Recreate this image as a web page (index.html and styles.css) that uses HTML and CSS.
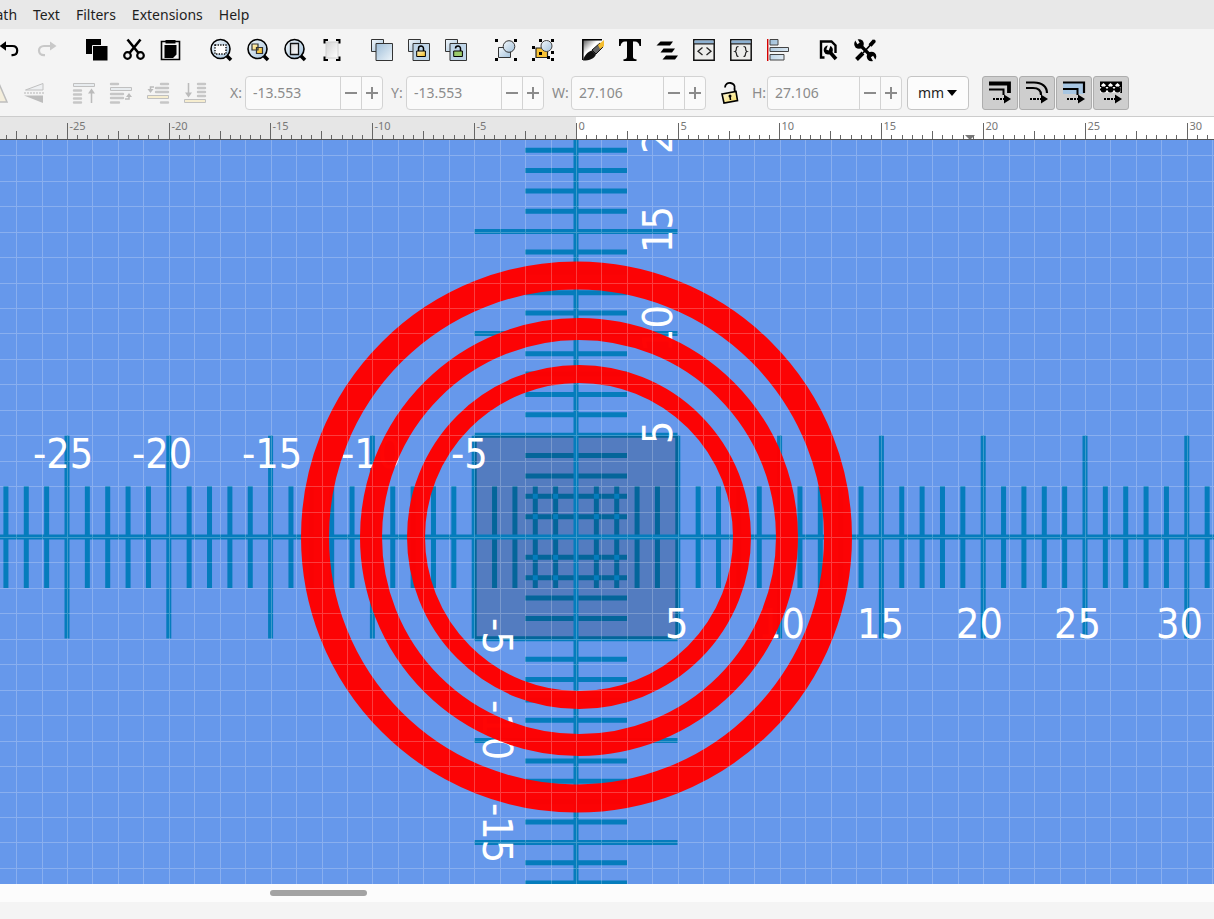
FILE: index.html
```html
<!DOCTYPE html>
<html lang="en">
<head>
<meta charset="utf-8">
<title>Vector drawing editor</title>
<link rel="stylesheet" href="styles.css">
</head>
<body>
<svg class="defs" aria-hidden="true">
  <defs>
    <linearGradient id="glass" x1="0" y1="0" x2="1" y2="1"><stop offset="0" stop-color="#f2f7fb"/><stop offset="1" stop-color="#a5c3dc"/></linearGradient>
    <linearGradient id="page" x1="0" y1="0" x2="1" y2="1"><stop offset="0" stop-color="#d4d4d4"/><stop offset="1" stop-color="#ffffff"/></linearGradient>
    <linearGradient id="blue" x1="0" y1="0" x2="1" y2="1"><stop offset="0" stop-color="#9dbdd8"/><stop offset="1" stop-color="#eef5fa"/></linearGradient>
    <linearGradient id="gold" x1="0" y1="0" x2="1" y2="1"><stop offset="0" stop-color="#fff6c8"/><stop offset="1" stop-color="#f0b71c"/></linearGradient>
    <linearGradient id="cream" x1="0" y1="0" x2="1" y2="1"><stop offset="0" stop-color="#fffbe4"/><stop offset="1" stop-color="#f7dc5c"/></linearGradient>
    <linearGradient id="ink" x1="0" y1="0" x2="1" y2="1"><stop offset="0" stop-color="#555"/><stop offset=".4" stop-color="#fff"/></linearGradient>
  </defs>
</svg>

<nav class="menubar" aria-label="Menu">
  <button>Path</button><button>Text</button><button>Filters</button><button>Extensions</button><button>Help</button>
</nav>

<div class="commands" role="toolbar" aria-label="Commands">
  <div class="group">
    <button aria-label="Undo"><svg viewBox="0 0 22 22"><path d="M5 7h8.500c3 0 4.700 1.800 4.700 4.600s-1.700 4.600-4.700 4.600h-1" fill="none" stroke="#000" stroke-width="2.200"/><path d="M.500 7 7 2.300v9.400z"/></svg></button>
    <button aria-label="Redo" disabled><svg viewBox="0 0 22 22"><path d="M15 7H8c-3 0-5 2-5 4.600s2 4.600 5 4.600h1" fill="none" stroke="#c8c8c8" stroke-width="2.200"/><path d="M20.500 7 14 2.500v9z" fill="#c8c8c8"/></svg></button>
  </div>
  <div class="group">
    <button aria-label="Copy"><svg viewBox="0 0 22 22"><path d="M0 0h15v15H0z"/><path d="M6.500 6.500h15.500v15.500H6.500z" stroke="#f4f4f4"/></svg></button>
    <button aria-label="Cut"><svg viewBox="0 0 22 22"><g fill="none" stroke="#000"><circle cx="4.500" cy="16.500" r="3.300" stroke-width="2.200"/><circle cx="17.500" cy="16.500" r="3.300" stroke-width="2.200"/><path d="M4.500.500 15.500 14M17.500.500 6.500 14" stroke-width="2.600"/></g></svg></button>
    <button aria-label="Paste"><svg viewBox="0 0 22 22"><path d="M6 2.500H1.500v18h18v-18H15" fill="none" stroke="#000" stroke-width="1.600"/><path d="M5.500 1h10v3.500h-10zM4.500 6h12v9.500L13 19H4.500z"/></svg></button>
  </div>
  <div class="group">
    <button aria-label="Zoom selection"><svg viewBox="0 0 22 22"><path d="m17 17 4 4" stroke="#000" stroke-width="3.500"/><circle cx="10.500" cy="10" r="9.500" fill="url(#glass)" stroke="#000" stroke-width="1.600"/><path d="M5 6h11v9H5z" fill="#fff" stroke="#000" stroke-width="1.400" stroke-dasharray="1.300 1.300"/></svg></button>
    <button aria-label="Zoom drawing"><svg viewBox="0 0 22 22"><path d="m17 17 4 4" stroke="#000" stroke-width="3.500"/><circle cx="10.500" cy="10" r="9.500" fill="url(#glass)" stroke="#000" stroke-width="1.600"/><path d="M5 5h6v6H5zM9.500 8.500h6v6h-6z" fill="url(#gold)" stroke="#333" stroke-width="1.200"/></svg></button>
    <button aria-label="Zoom page"><svg viewBox="0 0 22 22"><path d="m17 17 4 4" stroke="#000" stroke-width="3.500"/><circle cx="10.500" cy="10" r="9.500" fill="url(#glass)" stroke="#000" stroke-width="1.600"/><path d="M6.500 4.500h8v11h-8z" fill="url(#page)" stroke="#111" stroke-width="1.300"/></svg></button>
    <button aria-label="Resize page"><svg viewBox="0 0 22 22"><path d="M5 3h12v16H5z" fill="url(#page)" stroke="#d0d0d0"/><path d="M3.500 4.500V1H7M15 1h3.500v3.500M3.500 17.500V21H7M15 21h3.500v-3.500" fill="none" stroke="#000" stroke-width="2"/></svg></button>
  </div>
  <div class="group">
    <button aria-label="Duplicate"><svg viewBox="0 0 22 22"><path d="M.500.500h12v12H.500z" fill="url(#glass)" stroke="#333"/><path d="M5 4.500h16.500v17H5z" fill="url(#blue)" stroke="#333"/></svg></button>
    <button aria-label="Clone"><svg viewBox="0 0 22 22"><path d="M.500.500h12v12H.500z" fill="url(#glass)" stroke="#333"/><path d="M5 4.500h16.500v17H5z" fill="#bfd5e8" stroke="#333"/><path d="M10.500 12v-2.500a2.500 2.500 0 0 1 5 0V12" fill="none" stroke="#000" stroke-width="1.500"/><path d="M8.700 12h8.700v5.500H8.700z" fill="url(#gold)" stroke="#000"/></svg></button>
    <button aria-label="Unlink clone"><svg viewBox="0 0 22 22"><path d="M.500.500h12v12H.500z" fill="url(#glass)" stroke="#333"/><path d="M5 4.500h16.500v17H5z" fill="#bfd5e8" stroke="#333"/><path d="M10.500 9.500a2.500 2.500 0 0 1 5 0V12" fill="none" stroke="#000" stroke-width="1.500"/><path d="M8.700 12h8.700v5.500H8.700z" fill="#9bcb6b" stroke="#000"/></svg></button>
  </div>
  <div class="group">
    <button aria-label="Group"><svg viewBox="0 0 22 22"><path d="M3.500 8.500h12v10h-12z" fill="url(#glass)" stroke="#333"/><circle cx="14" cy="7.500" r="5.800" fill="url(#glass)" stroke="#333"/><path d="M0 0h3v3H0zM19 0h3v3h-3zM0 19h3v3H0zM19 19h3v3h-3z"/></svg></button>
    <button aria-label="Ungroup"><svg viewBox="0 0 22 22"><path d="M4 9h11.500v9.500H4z" fill="#f7c234" stroke="#222" stroke-width="1.200"/><circle cx="14.500" cy="7" r="5.500" fill="url(#glass)" stroke="#444"/><path d="M7 0h3v3H7zM19 0h3v3h-3zM0 7h3v3H0zM7 13h3v3H7zM0 19h3v3H0zM15 17h3v3h-3zM19 19h3v3h-3zM19 12h3v3h-3z"/></svg></button>
  </div>
  <div class="group">
    <button aria-label="Fill and stroke"><svg viewBox="0 0 22 22"><path d="M.800.800h20L.800 21z" fill="url(#ink)"/><path d="M.800 21V.800H20" fill="none" stroke="#000" stroke-width="1.500"/><path d="M1 21.500c1-5 5-9 9-10l4 4c-2 4-6 6-13 6z" fill="#111"/><path d="m10 11 8-7 3 4-7 7z" fill="#666" stroke="#111"/><path d="m16 6 6-5v6l-4 3z" fill="#f5bd2e"/></svg></button>
    <button aria-label="Text and font"><svg viewBox="0 0 22 22"><path d="M0 0h22v7h-1.500c-.500-3-2-4.500-4.500-4.500h-2V17c0 2.500.500 3 3.500 3.300V22h-13v-1.700c3-.300 3.500-.800 3.500-3.300V2.500H6C3.500 2.500 2 4 1.500 7H0z"/></svg></button>
    <button aria-label="Layers"><svg viewBox="0 0 22 22"><path d="M4.500 2.500H17l-3 4H.500zM7.500 9.500H19l-3 4H4.500zM10 16.500h12l-3 4H6.500z"/></svg></button>
    <button aria-label="XML editor"><svg viewBox="0 0 22 22"><path d="M.800.800h20.400v20.400H.800z" fill="#ededeb" stroke="#111" stroke-width="1.500"/><path d="M1.500 1.500h19v3h-19z" fill="#8db1d2"/><path d="M1 4.800h20M9.500 8.500 5 12.200 9.500 16m4-7.500 4.500 3.700-4.500 3.800" fill="none" stroke="#222" stroke-width="1.300"/></svg></button>
    <button aria-label="Selectors and CSS"><svg viewBox="0 0 22 22"><path d="M.800.800h20.400v20.400H.800z" fill="#ededeb" stroke="#111" stroke-width="1.500"/><path d="M1.500 1.500h19v3h-19z" fill="#8db1d2"/><path d="M1 4.800h20M8.500 7.500c-4 0-.500 4-3.500 5 3 1 0 5 3.500 5m5-10c4 0 .500 4 3.500 5-3 1 0 5-3.500 5" fill="none" stroke="#222" stroke-width="1.200"/></svg></button>
    <button aria-label="Align and distribute"><svg viewBox="0 0 22 22"><path d="M.700 0v22" stroke="#d40000" stroke-width="1.400"/><path d="M3 .500h8v5.500H3zM3 8.500h18.500v4H3zM3 15.500h14v5.500H3z" fill="url(#blue)" stroke="#444"/></svg></button>
  </div>
  <div class="group">
    <button aria-label="Document properties"><svg viewBox="0 0 22 22"><path d="M7.500 18.500H4v-16h10.500l4 4V14" fill="none" stroke="#000" stroke-width="2.400"/><circle cx="11.300" cy="11" r="4.600"/><path d="m12 12 7 8" stroke="#000" stroke-width="3.600"/><path d="M12.500 5.500 10.500 11" stroke="#f4f4f4" stroke-width="2.600"/></svg></button>
    <button aria-label="Preferences"><svg viewBox="0 0 22 22"><path d="m5 5 12 12" stroke="#000" stroke-width="3.200"/><circle cx="5" cy="5" r="4.800"/><circle cx="17.500" cy="17.500" r="4.800"/><path d="M2 0 4.500 4.500M20.500 22l-2.500-4.500" stroke="#f4f4f4" stroke-width="2.600"/><path d="M21 1 9 14" stroke="#000" stroke-width="1.800"/><path d="m20.500 1.500-4.500 5M9 14l-6.500 6.500" fill="none" stroke="#000" stroke-width="4"/></svg></button>
  </div>
</div>

<div class="controls" role="toolbar" aria-label="Tool controls">
  <div class="group">
    <button aria-label="Flip horizontal" disabled><svg viewBox="0 0 22 22"><path d="M13 1.500V20h8z" fill="#f4eedc" stroke="#bdbdbd" stroke-width="1.500"/></svg></button>
    <button aria-label="Flip vertical" disabled><svg viewBox="0 0 22 22"><path d="M20 1.500V8H2.500z" fill="#eef0f2" stroke="#c0c0c0"/><path d="M20 13.500V21L1 13.500z" fill="#bdbdbd"/><path d="M1 11h20" stroke="#b5b5b5" stroke-dasharray="2 1"/></svg></button>
  </div>
  <div class="group">
    <button aria-label="Raise to top" disabled><svg viewBox="0 0 22 22"><path d="M.500 1.500h21v3H.500z" fill="#e8ecef" stroke="#c0c0c0"/><path d="M1 8.500h7M1 12.500h7M1 16.500h7M1 20.500h7" stroke="#c6c6c6" stroke-width="2.400" stroke-linecap="round"/><path d="M18.500 21V10" stroke="#bbb" stroke-width="1.500"/><path d="m18.500 6.500 3.500 5h-7z" fill="#bbb"/></svg></button>
    <button aria-label="Raise" disabled><svg viewBox="0 0 22 22"><path d="M.500 5.500h21v3H.500z" fill="#e8ecef" stroke="#c0c0c0"/><path d="M1 2h7M1 12h12M1 16h12M1 20.500h8" stroke="#c6c6c6" stroke-width="2.400" stroke-linecap="round"/><path d="M15 17h4v-3" fill="none" stroke="#bbb" stroke-width="1.500"/><path d="m19 11 3 4h-6z" fill="#bbb"/></svg></button>
    <button aria-label="Lower" disabled><svg viewBox="0 0 22 22"><path d="M.500 13.500h21v3H.500z" fill="#f6edcf" stroke="#c0c0c0"/><path d="M14 2h7M9 6h12M9 10h12M14 20.500h7" stroke="#c6c6c6" stroke-width="2.400" stroke-linecap="round"/><path d="M7 5H3.500v3" fill="none" stroke="#bbb" stroke-width="1.500"/><path d="m3.500 11-3-4h6z" fill="#bbb"/></svg></button>
    <button aria-label="Lower to bottom" disabled><svg viewBox="0 0 22 22"><path d="M.500 17.500h21v3H.500z" fill="#f6edcf" stroke="#c0c0c0"/><path d="M14 2h7M14 6h7M14 10h7M14 14h7" stroke="#c6c6c6" stroke-width="2.400" stroke-linecap="round"/><path d="M4.500 1v11" stroke="#bbb" stroke-width="1.500"/><path d="m4.500 15.500-3.500-5h7z" fill="#bbb"/></svg></button>
  </div>
  <div class="fields">
    <div class="field"><label for="x">X:</label><div class="spin"><input id="x" type="text" value="-13.553" disabled><button aria-label="Decrease X" disabled><svg viewBox="0 0 12 12"><path d="M0 6h12"/></svg></button><button aria-label="Increase X" disabled><svg viewBox="0 0 12 12"><path d="M0 6h12M6 0v12"/></svg></button></div></div>
    <div class="field"><label for="y">Y:</label><div class="spin"><input id="y" type="text" value="-13.553" disabled><button aria-label="Decrease Y" disabled><svg viewBox="0 0 12 12"><path d="M0 6h12"/></svg></button><button aria-label="Increase Y" disabled><svg viewBox="0 0 12 12"><path d="M0 6h12M6 0v12"/></svg></button></div></div>
    <div class="field"><label for="w" class="wide">W:</label><div class="spin size"><input id="w" type="text" value="27.106" disabled><button aria-label="Decrease width" disabled><svg viewBox="0 0 12 12"><path d="M0 6h12"/></svg></button><button aria-label="Increase width" disabled><svg viewBox="0 0 12 12"><path d="M0 6h12M6 0v12"/></svg></button></div></div>
    <button class="lock" aria-label="Lock width and height"><svg viewBox="0 0 20 24"><path d="M5 6.500c0-3.500 3-5 5.500-4.500s5 2 4 6l.500 3" fill="none" stroke="#000" stroke-width="1.800"/><path d="m2 13 14-2.500 1.500 9L4 22z" fill="url(#cream)" stroke="#000" stroke-width="1.600"/><circle cx="10" cy="15" r="1.500"/><path d="m10 15 .500 4" stroke="#000" stroke-width="1.500"/></svg></button>
    <div class="field"><label for="h">H:</label><div class="spin size"><input id="h" type="text" value="27.106" disabled><button aria-label="Decrease height" disabled><svg viewBox="0 0 12 12"><path d="M0 6h12"/></svg></button><button aria-label="Increase height" disabled><svg viewBox="0 0 12 12"><path d="M0 6h12M6 0v12"/></svg></button></div></div>
  </div>
  <div class="unit"><select aria-label="Units"><option>mm</option><option>px</option><option>in</option></select><svg viewBox="0 0 10 6"><path d="M0 0h10L5 6z"/></svg></div>
  <div class="toggles">
    <button aria-label="Scale stroke width" aria-pressed="true"><svg viewBox="0 0 22 22"><path d="M0 1.500h20V11" fill="none" stroke="#000" stroke-width="3.800"/><path d="M0 7.500h14.500V13" fill="none" stroke="#000" stroke-width="2"/><path d="M4 17h11" stroke="#000" stroke-width="2" stroke-dasharray="2 1 3 1"/><path d="m15 12.500 7 4.500-7 4.500z"/></svg></button>
    <button aria-label="Scale rounded corners" aria-pressed="true"><svg viewBox="0 0 22 22"><path d="M0 .500h8c8 0 13 4 13 10.500M0 6h7c5 0 8 2 8 7" fill="none" stroke="#000" stroke-width="2.200"/><path d="M4 17h11" stroke="#000" stroke-width="2" stroke-dasharray="2 1 3 1"/><path d="m15 12.500 7 4.500-7 4.500z"/></svg></button>
    <button aria-label="Move gradients" aria-pressed="true"><svg viewBox="0 0 22 22"><path d="M0 1h21v11H0z" fill="#a7c6e2"/><path d="M0 .500h21V11" fill="none" stroke="#000" stroke-width="2.200"/><path d="M0 7h14.500V13" fill="none" stroke="#000" stroke-width="2"/><path d="M4 17h11" stroke="#000" stroke-width="2" stroke-dasharray="2 1 3 1"/><path d="m15 12.500 7 4.500-7 4.500z"/></svg></button>
    <button aria-label="Move patterns" aria-pressed="true"><svg viewBox="0 0 22 22"><path d="M0-.500h22V5H0zM20 0h2v11h-2z"/><path d="M0 5h20.500v5.500H0z" fill="#fff"/><path d="m3.500 1 2.500 2.200L3.500 6 1 3.200zM10.500 1 13 3.200 10.500 6 8 3.200zM17.500 1 20 3.200 17.500 6 15 3.200z" fill="#fff"/><path d="M0 7.500h20" stroke="#000" stroke-width="1.400"/><circle cx="3.500" cy="7.500" r="3"/><circle cx="10.500" cy="7.500" r="3"/><circle cx="17.500" cy="7.500" r="3"/><path d="M4 17h11" stroke="#000" stroke-width="2" stroke-dasharray="2 1 3 1"/><path d="m15 12.500 7 4.500-7 4.500z"/></svg></button>
  </div>
</div>

<svg class="ruler" id="ruler" role="img" aria-label="Horizontal ruler"></svg>
<main class="stage"><svg class="drawing" id="drawing" role="img" aria-label="Drawing"></svg></main>
<div class="scroll"><div class="thumb"></div></div>
<footer class="palette"></footer>
<script src="app.js"></script>
</body>
</html>
```
FILE: styles.css
```css
* { box-sizing: border-box; }
body {
  margin: 0;
  height: 100vh;
  display: flex;
  flex-direction: column;
  overflow: hidden;
  background: #f4f4f4;
  color: #1e1e1e;
  font: 14px/20px "Noto Sans", "Open Sans", sans-serif;
}
button {
  margin: 0;
  padding: 0;
  border: 0;
  background: none;
  color: inherit;
  font: inherit;
}
.defs { position: absolute; width: 0; height: 0; }

.menubar {
  flex: none;
  display: flex;
  align-items: center;
  gap: 16px;
  height: 29px;
  margin-left: -13px;
  background: #e8e8e8;
}

.commands, .controls { flex: none; display: flex; align-items: center; }
.commands { height: 42px; margin-left: -9px; gap: 13px; }
.controls { height: 46px; margin-left: -22px; padding-bottom: 1px; border-bottom: 1px solid #cccccc; }
.group { display: flex; }
.controls .group + .group { margin-left: 13px; }
.group button {
  display: flex;
  align-items: center;
  justify-content: center;
  width: 37px;
  height: 34px;
}
.group svg { width: 22px; height: 22px; overflow: visible; }

.fields { display: flex; align-items: center; margin-left: 17px; gap: 8px; }
.field { display: flex; align-items: center; color: #8b8b8b; }
.field label { width: 15px; }
.field .wide { width: 19px; }
.spin {
  display: flex;
  width: 138px;
  height: 34px;
  border: 1px solid #d3d3d3;
  border-radius: 4px;
  background: #fafafa;
}
.size { width: 135px; }
.spin input {
  flex: 1;
  min-width: 0;
  padding: 0 7px;
  border: 0;
  background: none;
  color: #8b8b8b;
  font: inherit;
}
.spin button {
  display: flex;
  align-items: center;
  justify-content: center;
  width: 21px;
  border-left: 1px solid #d3d3d3;
}
.spin svg { width: 12px; height: 12px; fill: none; stroke: #8b8b8b; stroke-width: 2; }
.lock { display: flex; margin: 0 4px 0 6px; }
.lock svg { width: 20px; height: 24px; }

.unit { display: flex; align-items: center; margin-left: 5px; position: relative; }
.unit select {
  appearance: none;
  width: 62px;
  height: 34px;
  padding: 0 10px;
  border: 1px solid #c4c4c4;
  border-radius: 4px;
  background: #fcfcfc;
  color: #1e1e1e;
  font: inherit;
}
.unit svg { position: absolute; right: 12px; width: 10px; height: 6px; pointer-events: none; }

.toggles { display: flex; gap: 1px; margin-left: 13px; }
.toggles button {
  display: flex;
  align-items: center;
  justify-content: center;
  width: 36px;
  height: 34px;
  border: 1px solid #adadad;
  border-radius: 3px;
  background: #cecece;
}
.toggles svg { width: 22px; height: 22px; overflow: visible; }

.ruler { flex: none; display: block; width: 100%; height: 23px; background: #e6e6e6; border-bottom: 1px solid #555; }
.ruler .inside { fill: #fff; }
.ruler .ticks { fill: none; stroke: #666; }
.ruler text { fill: #777; font-size: 11px; }
.ruler .pointer { fill: #777; }

.stage { flex: 1; min-height: 0; background: #6698eb; }
.drawing { display: block; width: 100%; height: 100%; }
.scale-mark { stroke: #057cbc; stroke-width: 5; fill: none; }
.crossing { fill: #057cbc; }
.square { fill: #000; fill-opacity: .18; }
.ring { fill: none; stroke: #ff0000; stroke-opacity: .98; }
.grid { fill: none; stroke: #fff; stroke-opacity: .23; shape-rendering: crispEdges; }
.number { fill: #fff; font: 41px "DejaVu Sans Condensed", "DejaVu Sans", sans-serif; font-stretch: condensed; }

.scroll { flex: none; display: flex; align-items: center; height: 18px; background: #fcfcfc; }
.thumb { width: 8%; height: 6px; margin-left: 270px; border-radius: 3px; background: #a3a3a3; }
.palette { flex: none; height: 17px; }
```
FILE: app.js
```js
const NS = "http://www.w3.org/2000/svg";
const UNIT = 20.36;
const ORIGIN = { x: 576, y: 397 };

function add(parent, name, attrs, text) {
  const node = document.createElementNS(NS, name);
  for (const key in attrs) node.setAttribute(key, attrs[key]);
  if (text !== undefined) node.textContent = text;
  parent.appendChild(node);
  return node;
}

function drawRuler(svg) {
  add(svg, "rect", { class: "inside", x: ORIGIN.x, y: 0, width: 4000, height: 23 });
  const width = svg.clientWidth || window.innerWidth;
  let path = "";
  for (let i = -56; ; i++) {
    const x = Math.round(ORIGIN.x + i * UNIT / 2 - 0.2) + 0.5;
    if (x > width) break;
    const top = i % 10 === 0 ? 6 : i % 5 === 0 ? 14 : 18;
    path += `M${x} ${top}V23`;
    if (i % 10 === 0) add(svg, "text", { x: x + 2, y: 13 }, String(i / 2));
  }
  add(svg, "path", { class: "ticks", d: path });
  add(svg, "path", { class: "pointer", d: "M965 18h10l-5 5z" });
}

function drawPicture(svg) {
  const { x: cx, y: cy } = ORIGIN;
  const ox = cx, oy = cy;
  let marks = "";
  for (let i = -60; i <= 120; i++) {
    if (i === 0) continue;
    const half = i % 5 === 0 ? 101.5 : 51;
    const x = ox + i * UNIT, y = oy + i * UNIT;
    marks += `M${x} ${oy - half}V${oy + half}M${ox - half} ${y}H${ox + half}`;
  }
  add(svg, "path", { class: "scale-mark", d: marks });
  add(svg, "rect", { class: "square", x: 475, y: 296, width: 203, height: 203 });
  for (const i of [-2, -1, 1, 2])
    for (const j of [-2, -1, 1, 2])
      add(svg, "rect", { class: "crossing", x: ox + i * UNIT - 2.5, y: oy + j * UNIT - 2.5, width: 5, height: 5 });
  add(svg, "path", { class: "scale-mark", d: `M0 ${oy}H4000M${ox} 0V4000` });

  const across = [[-25, 33], [-20, 132], [-15, 242], [-10, 341], [-5, 451]];
  for (const [n, x] of across) add(svg, "text", { class: "number", x, y: 328 }, n);
  const right = [[5, 665], [10, 758], [15, 857], [20, 956], [25, 1054], [30, 1156]];
  for (const [n, x] of right) add(svg, "text", { class: "number", x, y: 498 }, n);
  const up = [[20, 14], [15, 113], [10, 212], [5, 304]];
  for (const [n, y] of up) add(svg, "text", { class: "number", transform: `translate(672 ${y}) rotate(-90)` }, n);
  const down = [[-5, 478], [-10, 560], [-15, 663]];
  for (const [n, y] of down) add(svg, "text", { class: "number", transform: `translate(483 ${y}) rotate(90)` }, n);

  add(svg, "circle", { class: "ring", cx: 576.5, cy, r: 261.5, "stroke-width": 28 });
  add(svg, "circle", { class: "ring", cx: 579, cy, r: 208, "stroke-width": 22 });
  add(svg, "circle", { class: "ring", cx: 579, cy, r: 163, "stroke-width": 18 });

  let grid = "";
  for (let i = -30; i <= 130; i++) {
    grid += `M${Math.round(cx + i * UNIT * 1.25) + 0.5} 0V4000`;
    grid += `M0 ${Math.round(cy + i * UNIT * 1.25) + 0.5}H4000`;
  }
  add(svg, "path", { class: "grid", d: grid });
}

drawRuler(document.getElementById("ruler"));
drawPicture(document.getElementById("drawing"));
```
